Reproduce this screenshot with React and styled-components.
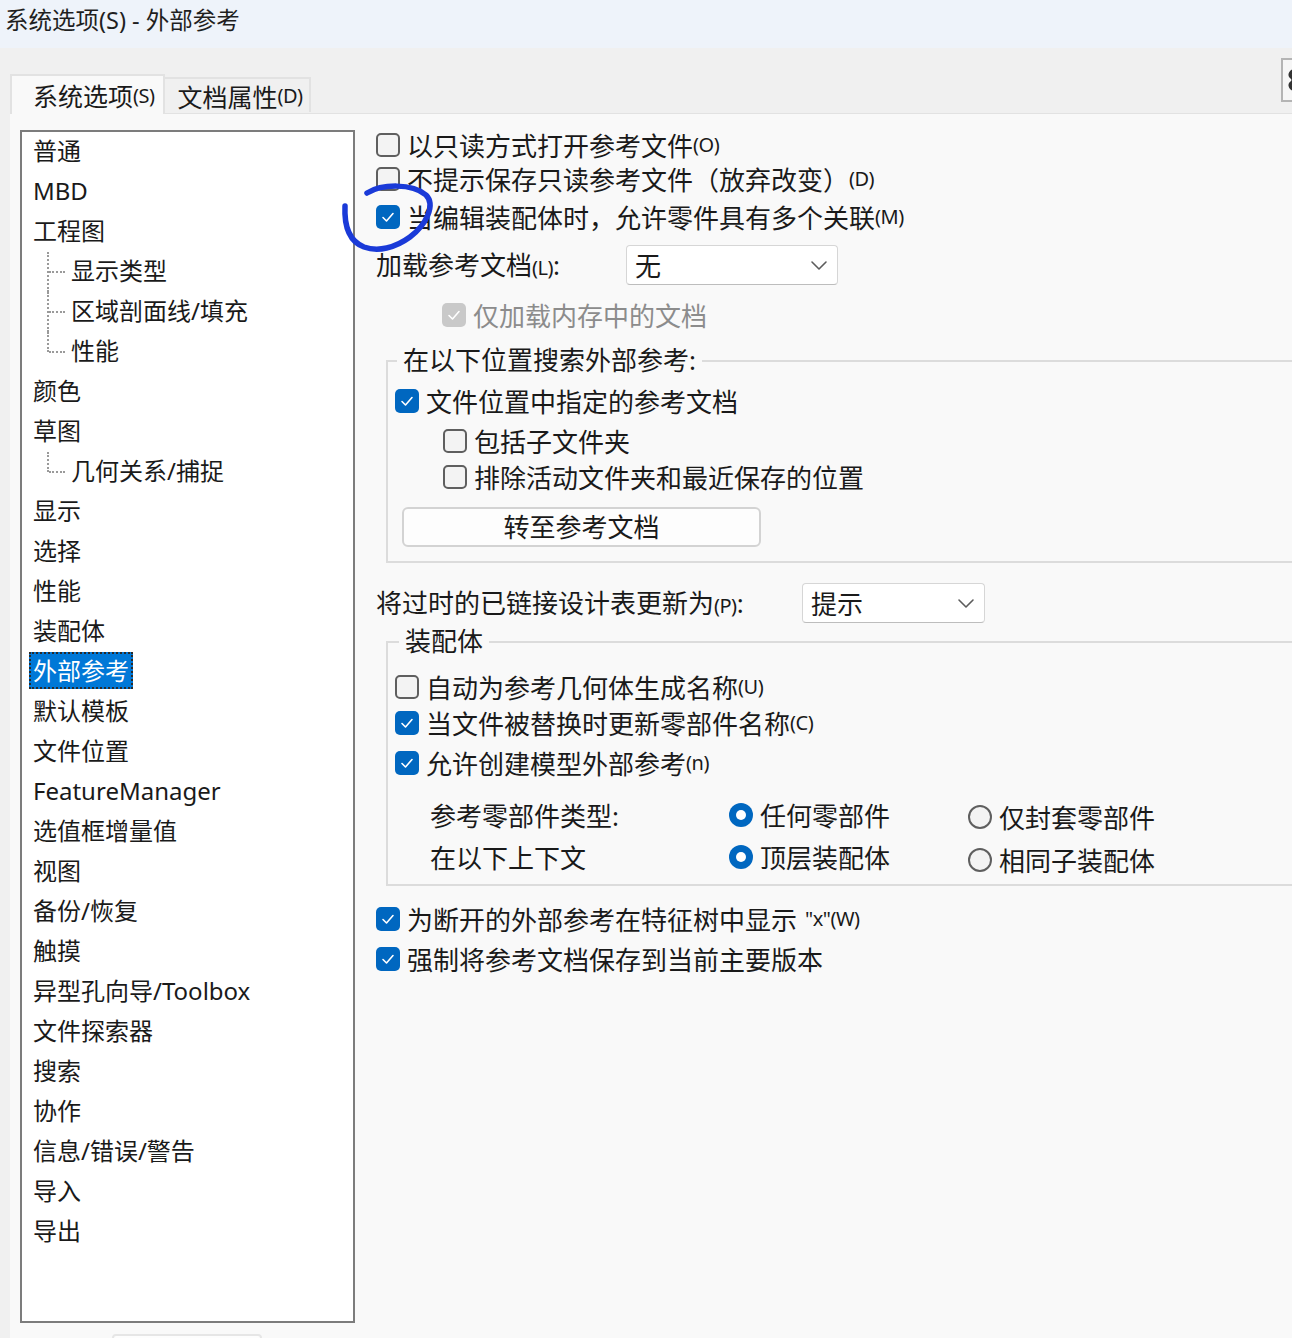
import React from "react";
import styled, { createGlobalStyle } from "styled-components";
import { Settings } from "lucide-react";

const GlobalStyle = createGlobalStyle`
  html, body { margin: 0; padding: 0; }
  body {
    width: 1292px;
    height: 1338px;
    overflow: hidden;
    background: #f0f0f0;
    font-family: "Noto Sans", "Noto Sans CJK SC", sans-serif;
    color: #1a1a1a;
  }
`;

const Window = styled.div`
  width: 1292px;
  height: 1338px;
  overflow: hidden;
  display: flex;
  flex-direction: column;
`;

const TitleBar = styled.div`
  height: 48px;
  flex: none;
  background: #eef3fa;
  padding-left: 5px;
  font-size: 23.5px;
  line-height: 40px;
  color: #1f1f1f;
  white-space: nowrap;
`;

const TabRow = styled.div`
  height: 65px;
  flex: none;
  display: flex;
  align-items: flex-end;
  padding-left: 10px;
  position: relative;
`;

const Tab = styled.div`
  height: ${(p) => (p.$active ? "40px" : "35px")};
  margin-bottom: ${(p) => (p.$active ? "-1px" : "1px")};
  box-sizing: border-box;
  padding: 0 ${(p) => (p.$active ? "8px 0 21px" : "6px 0 13px")};
  display: flex;
  align-items: center;
  font-size: 25px;
  background: ${(p) => (p.$active ? "#f9f9f9" : "#f0f0f0")};
  border: 2px solid #e2e2e2;
  border-bottom: none;
  border-left-width: ${(p) => (p.$active ? "2px" : "0")};
  white-space: nowrap;
  z-index: 1;
`;

const Acc = styled.span`
  font-size: 20px;
  letter-spacing: -0.5px;
  margin-left: ${(p) => p.$gap || 0}px;
`;

const HelpButton = styled.div`
  position: absolute;
  top: 10px;
  left: 1281px;
  width: 44px;
  height: 44px;
  box-sizing: border-box;
  border: 2px solid #b4b4b4;
  background: #f6f6f6;
  display: flex;
  align-items: center;
  justify-content: center;
  color: #333;
`;

const Panel = styled.div`
  flex: 1;
  display: flex;
  align-items: flex-start;
  margin-left: 10px;
  background: #f9f9f9;
  border-top: 1px solid #e2e2e2;
  min-height: 0;
`;

const TreeColumn = styled.div`
  flex: none;
  display: flex;
  flex-direction: column;
  margin: 16px 0 0 10px;
`;

const Tree = styled.div`
  width: 335px;
  height: 1193px;
  box-sizing: border-box;
  background: #ffffff;
  border: 2px solid #7c7c7c;
  padding: 0 0 0 11px;
  display: flex;
  flex-direction: column;
`;

const TreeRow = styled.div`
  position: relative;
  height: 40px;
  box-sizing: border-box;
  padding-bottom: 3px;
  flex: none;
  display: flex;
  align-items: center;
  padding-left: ${(p) => (p.$level ? "38px" : "0")};
  font-size: 24px;
  white-space: nowrap;

  ${(p) =>
    p.$level
      ? `
    &::before {
      content: "";
      position: absolute;
      left: 14px;
      top: 0;
      height: ${p.$last ? "20px" : "40px"};
      border-left: 2px dotted #9a9a9a;
    }
    &::after {
      content: "";
      position: absolute;
      left: 16px;
      top: 19px;
      width: 16px;
      border-top: 2px dotted #9a9a9a;
    }
  `
      : ""}
`;

const TreeLabel = styled.span`
  line-height: 33px;
  ${(p) =>
    p.$selected
      ? `
    background: #0078d7;
    color: #ffffff;
    margin-left: -4px;
    padding: 0 2px;
    border: 2px dotted #2a2a2a;
  `
      : ""}
`;

const FooterButton = styled.div`
  margin: 11px 0 0 92px;
  width: 150px;
  height: 40px;
  box-sizing: border-box;
  border: 2px solid #e6e6e6;
  border-radius: 4px;
  background: #fdfdfd;
`;

const Options = styled.div`
  flex: 1;
  min-width: 0;
  display: flex;
  flex-direction: column;
  padding: 14px 0 0 21px;
  font-size: 26px;
`;

const Row = styled.div`
  position: relative;
  height: 34px;
  box-sizing: border-box;
  padding-bottom: 1px;
  flex: none;
  display: flex;
  align-items: center;
  margin-top: ${(p) => p.$mt || 0}px;
  margin-left: ${(p) => p.$indent || 0}px;
  white-space: nowrap;
  color: ${(p) => (p.$disabled ? "#8c8c8c" : "#1a1a1a")};
`;

const Box = styled.span`
  flex: none;
  width: 24px;
  height: 24px;
  box-sizing: border-box;
  border-radius: 5px;
  margin-right: 7px;
  display: flex;
  align-items: center;
  justify-content: center;
  background: ${(p) =>
    p.$disabled ? "#c9c9c9" : p.$checked ? "#0067c0" : "#f3f3f3"};
  border: ${(p) => (p.$checked ? "none" : "2px solid #5f5f5f")};
`;

const Check = ({ checked, disabled }) => (
  <Box $checked={checked} $disabled={disabled}>
    {checked && (
      <svg width="24" height="24" viewBox="0 0 24 24">
        <polyline
          points="7,12.5 10.5,16 17,8.5"
          fill="none"
          stroke="#ffffff"
          strokeWidth="1.6"
          strokeLinecap="round"
          strokeLinejoin="round"
        />
      </svg>
    )}
  </Box>
);

const Radio = styled.span`
  flex: none;
  width: 24px;
  height: 24px;
  box-sizing: border-box;
  border-radius: 50%;
  margin-right: 7px;
  display: flex;
  align-items: center;
  justify-content: center;
  background: ${(p) => (p.$checked ? "#0067c0" : "#f3f3f3")};
  border: ${(p) => (p.$checked ? "none" : "2px solid #5f5f5f")};

  &::after {
    content: "";
    display: ${(p) => (p.$checked ? "block" : "none")};
    width: 10px;
    height: 10px;
    border-radius: 50%;
    background: #ffffff;
  }
`;

const FieldRow = styled.div`
  height: 40px;
  flex: none;
  display: flex;
  align-items: center;
  margin-top: ${(p) => p.$mt || 0}px;
  white-space: nowrap;
`;

const FieldLabel = styled.span`
  width: ${(p) => p.$width}px;
  flex: none;
  padding-bottom: 3px;
`;

const Select = styled.div`
  width: ${(p) => p.$width}px;
  height: 40px;
  box-sizing: border-box;
  background: #ffffff;
  border: 1px solid #d6d6d6;
  border-bottom-color: #bdbdbd;
  border-radius: 4px;
  display: flex;
  align-items: center;
  justify-content: space-between;
  padding: 0 8px 0 8px;
`;

const Chevron = () => (
  <svg width="20" height="12" viewBox="0 0 20 12">
    <polyline
      points="3,3 10,10 17,3"
      fill="none"
      stroke="#5c5c5c"
      strokeWidth="1.6"
      strokeLinecap="round"
      strokeLinejoin="round"
    />
  </svg>
);

const Group = styled.fieldset`
  margin: ${(p) => p.$mt || 0}px -12px 0 10px;
  padding: 0 0 ${(p) => p.$pb || 0}px 7px;
  border: 2px solid #dcdcdc;
  min-width: 0;
  display: flex;
  flex-direction: column;
`;

const Legend = styled.legend`
  margin-left: ${(p) => p.$ml || 2}px;
  padding: 0 6px;
  height: 34px;
  line-height: 32px;
  font-size: 26px;
  white-space: nowrap;
`;

const PushButton = styled.div`
  margin: 13px 0 0 7px;
  width: 359px;
  height: 40px;
  box-sizing: border-box;
  padding-bottom: 2px;
  background: #fdfdfd;
  border: 2px solid #d3d3d3;
  border-radius: 6px;
  display: flex;
  align-items: center;
  justify-content: center;
`;

const RadioGrid = styled.div`
  margin: 18px 0 0 35px;
  display: grid;
  grid-template-columns: 299px 239px auto;
  grid-auto-rows: 34px;
  row-gap: 8px;
  white-space: nowrap;
`;

const Cell = styled.div`
  display: flex;
  align-items: center;
  padding-top: ${(p) => p.$drop || 0}px;
`;

const Annotation = styled.svg`
  position: absolute;
  left: -36px;
  top: -20px;
  overflow: visible;
  pointer-events: none;
`;

const tree = [
  { t: "普通" },
  { t: "MBD" },
  { t: "工程图" },
  { t: "显示类型", l: 1 },
  { t: "区域剖面线/填充", l: 1 },
  { t: "性能", l: 1, last: true },
  { t: "颜色" },
  { t: "草图" },
  { t: "几何关系/捕捉", l: 1, last: true },
  { t: "显示" },
  { t: "选择" },
  { t: "性能" },
  { t: "装配体" },
  { t: "外部参考", sel: true },
  { t: "默认模板" },
  { t: "文件位置" },
  { t: "FeatureManager" },
  { t: "选值框增量值" },
  { t: "视图" },
  { t: "备份/恢复" },
  { t: "触摸" },
  { t: "异型孔向导/Toolbox" },
  { t: "文件探索器" },
  { t: "搜索" },
  { t: "协作" },
  { t: "信息/错误/警告" },
  { t: "导入" },
  { t: "导出" },
];

export default function App() {
  return (
    <>
      <GlobalStyle />
      <Window>
        <TitleBar>系统选项(S) - 外部参考</TitleBar>

        <TabRow>
          <Tab $active>
            系统选项<Acc>(S)</Acc>
          </Tab>
          <Tab>
            文档属性<Acc>(D)</Acc>
          </Tab>
          <HelpButton>
            <Settings size={34} strokeWidth={2.4} />
          </HelpButton>
        </TabRow>

        <Panel>
          <TreeColumn>
            <Tree>
              {tree.map((n, i) => (
                <TreeRow key={i} $level={n.l} $last={n.last}>
                  <TreeLabel $selected={n.sel}>{n.t}</TreeLabel>
                </TreeRow>
              ))}
            </Tree>
            <FooterButton />
          </TreeColumn>

          <Options>
            <Row>
              <Check />
              以只读方式打开参考文件<Acc>(O)</Acc>
            </Row>
            <Row>
              <Check />
              不提示保存只读参考文件（放弃改变）<Acc>(D)</Acc>
            </Row>
            <Row $mt={4}>
              <Check checked />
              当编辑装配体时，允许零件具有多个关联<Acc>(M)</Acc>
              <Annotation width="100" height="80" viewBox="0 0 100 80">
                <path
                  d="M27,13 C42,4 72,3 86,15 C96,25 86,45 70,57 C55,68 38,72 24,67 C11,62 4,48 5,26"
                  fill="none"
                  stroke="#1a3ad8"
                  strokeWidth="5.5"
                  strokeLinecap="round"
                />
              </Annotation>
            </Row>

            <FieldRow $mt={11}>
              <FieldLabel $width={250}>
                加载参考文档<Acc>(L)</Acc>:
              </FieldLabel>
              <Select $width={212}>
                无
                <Chevron />
              </Select>
            </FieldRow>

            <Row $mt={13} $indent={66} $disabled>
              <Check checked disabled />
              仅加载内存中的文档
            </Row>

            <Group $mt={12} $pb={14}>
              <Legend>在以下位置搜索外部参考:</Legend>
              <Row $mt={6}>
                <Check checked />
                文件位置中指定的参考文档
              </Row>
              <Row $mt={6} $indent={48}>
                <Check />
                包括子文件夹
              </Row>
              <Row $mt={2} $indent={48}>
                <Check />
                排除活动文件夹和最近保存的位置
              </Row>
              <PushButton>转至参考文档</PushButton>
            </Group>

            <FieldRow $mt={20}>
              <FieldLabel $width={426}>
                将过时的已链接设计表更新为<Acc>(P)</Acc>:
              </FieldLabel>
              <Select $width={183}>
                提示
                <Chevron />
              </Select>
            </FieldRow>

            <Group $mt={2} $pb={10}>
              <Legend $ml={4}>装配体</Legend>
              <Row $mt={11}>
                <Check />
                自动为参考几何体生成名称<Acc>(U)</Acc>
              </Row>
              <Row $mt={2}>
                <Check checked />
                当文件被替换时更新零部件名称<Acc>(C)</Acc>
              </Row>
              <Row $mt={6}>
                <Check checked />
                允许创建模型外部参考<Acc>(n)</Acc>
              </Row>
              <RadioGrid>
                <Cell>参考零部件类型:</Cell>
                <Cell>
                  <Radio $checked />
                  任何零部件
                </Cell>
                <Cell $drop={3}>
                  <Radio />
                  仅封套零部件
                </Cell>
                <Cell>在以下上下文</Cell>
                <Cell>
                  <Radio $checked />
                  顶层装配体
                </Cell>
                <Cell $drop={6}>
                  <Radio />
                  相同子装配体
                </Cell>
              </RadioGrid>
            </Group>

            <Row $mt={16}>
              <Check checked />
              为断开的外部参考在特征树中显示<Acc $gap={8}>"x"(W)</Acc>
            </Row>
            <Row $mt={6}>
              <Check checked />
              强制将参考文档保存到当前主要版本
            </Row>
          </Options>
        </Panel>
      </Window>
    </>
  );
}
